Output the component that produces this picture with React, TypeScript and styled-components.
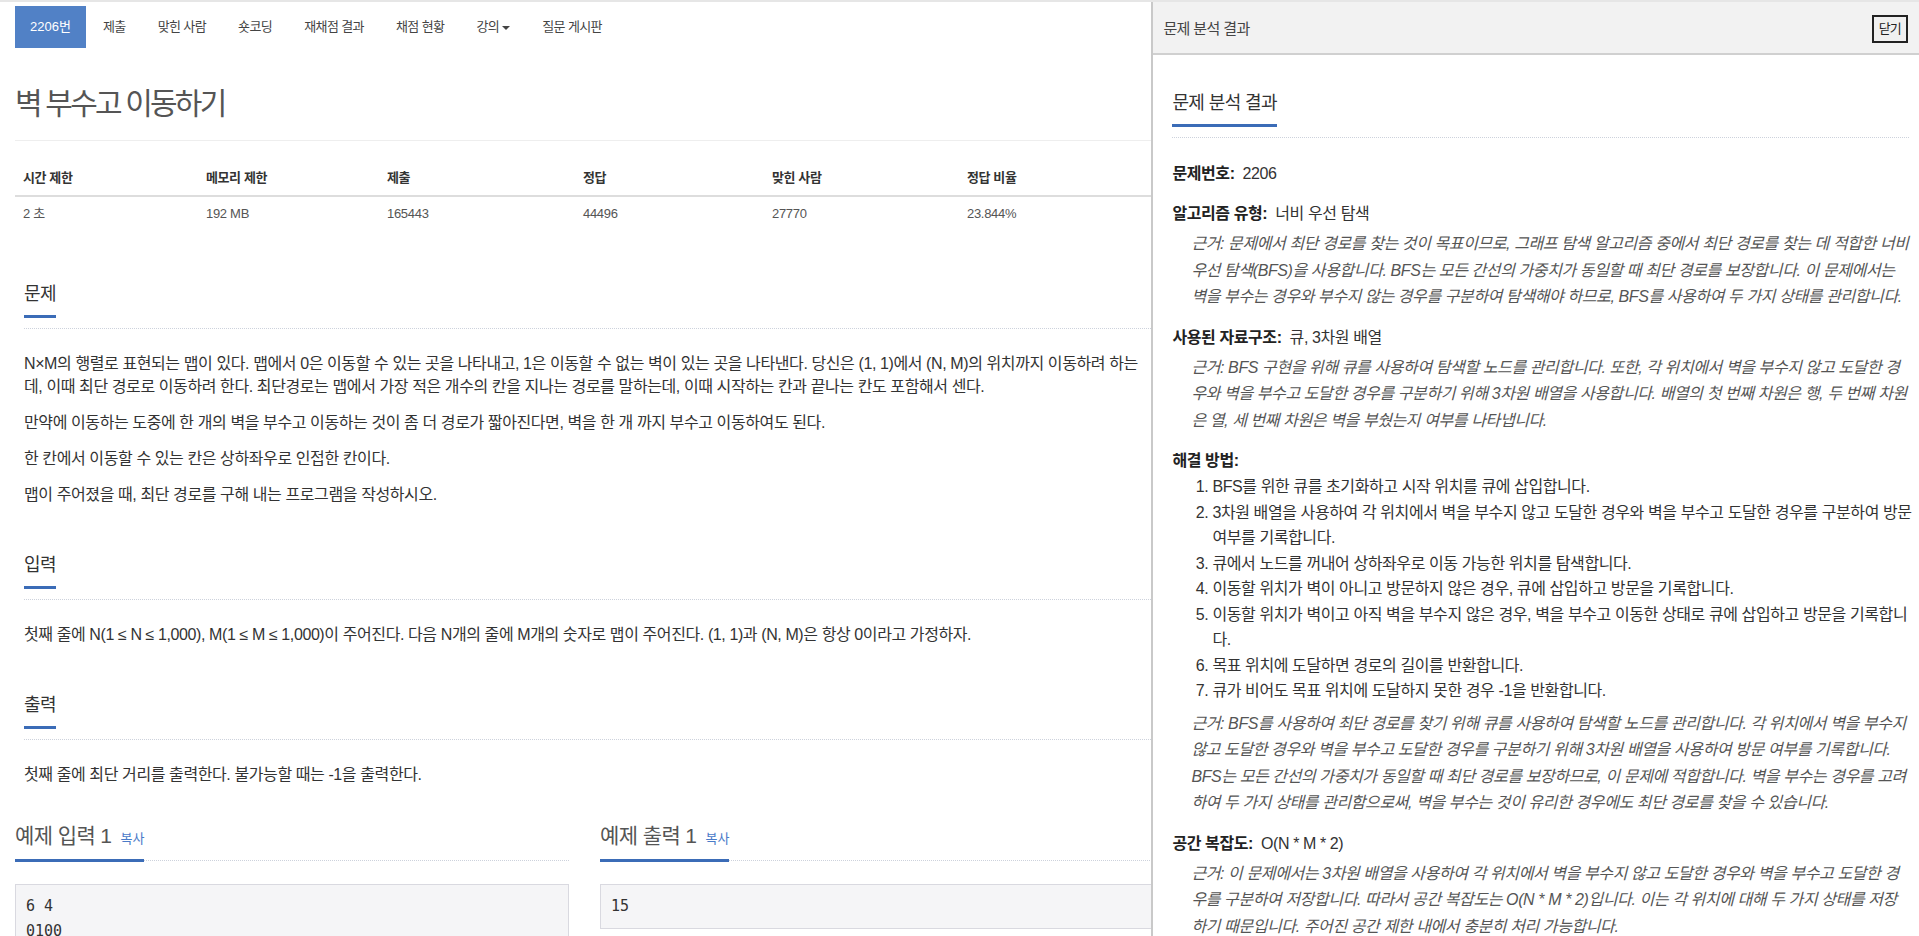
import React from 'react';
import styled, { createGlobalStyle } from 'styled-components';

const GlobalStyle = createGlobalStyle`
  *, *::before, *::after { box-sizing: border-box; }
  html, body { margin: 0; padding: 0; height: 100%; overflow: hidden; background: #ffffff; }
  body {
    font-family: "Liberation Sans", "Noto Sans CJK KR", sans-serif;
    color: #333;
  }
`;

const Layout = styled.div`
  display: grid;
  grid-template-columns: 60% 40%;
  height: 100vh;
  border-top: 2px solid #e6e6e6;
  overflow: hidden;
`;

const Main = styled.main`
  min-width: 0;
  overflow: hidden;
  padding: 4px 0 0 15px;
`;

const Nav = styled.ul`
  display: flex;
  list-style: none;
  margin: 0;
  padding: 0;
`;

const NavItem = styled.li<{ $active?: boolean }>`
  padding: 10px 15px;
  margin-right: 2px;
  font-size: 13px;
  line-height: 22px;
  letter-spacing: ${(p) => (p.$active ? '0' : '-0.6px')};
  color: ${(p) => (p.$active ? '#ffffff' : '#444')};
  background: ${(p) => (p.$active ? '#5181c6' : 'transparent')};
  white-space: nowrap;
`;

const Caret = styled.span`
  display: inline-block;
  width: 0;
  height: 0;
  margin-left: 3px;
  vertical-align: middle;
  border-top: 4px solid #444;
  border-left: 4px solid transparent;
  border-right: 4px solid transparent;
`;

const Title = styled.h1`
  margin: 36px 0 0;
  padding-bottom: 16px;
  border-bottom: 1px solid #eeeeee;
  font-size: 30px;
  line-height: 40px;
  font-weight: 400;
  color: #555;
  letter-spacing: -2.8px;
`;

const InfoTable = styled.table`
  width: 100%;
  margin-top: 20px;
  border-collapse: collapse;
  table-layout: fixed;
`;

const Th = styled.th`
  padding: 8px;
  text-align: left;
  font-size: 13px;
  line-height: 18px;
  font-weight: 700;
  color: #333;
  letter-spacing: -0.4px;
  border-bottom: 2px solid #dddddd;
`;

const Td = styled.td`
  padding: 8px;
  font-size: 13px;
  line-height: 18px;
  color: #555;
  letter-spacing: -0.3px;
`;

const Section = styled.section<{ $mt: number }>`
  margin: ${(p) => p.$mt}px 0 0 9px;
`;

const SectionHead = styled.div`
  border-bottom: 1px dotted #cdd2dc;
  padding-bottom: 10px;
`;

const HeadTitle = styled.h2`
  display: inline-block;
  margin: 0;
  padding-bottom: 9px;
  border-bottom: 3px solid #3b6cb7;
  font-size: 18px;
  line-height: 24px;
  font-weight: 400;
  letter-spacing: -0.6px;
  color: #333;
`;

const SectionBody = styled.div`
  margin-top: 23px;
`;

const Para = styled.p`
  margin: 0 0 13px;
  font-size: 16px;
  line-height: 23px;
  letter-spacing: -0.4px;
  color: #333;
  white-space: nowrap;
`;

const Samples = styled.div`
  display: grid;
  grid-template-columns: 554px 554px;
  column-gap: 31px;
  margin-top: 35px;
`;

const SampleHead = styled.div`
  border-bottom: 1px dotted #cdd2dc;
`;

const SampleTitle = styled.h2`
  display: inline-block;
  margin: 0 0 -2px;
  padding-bottom: 5px;
  border-bottom: 3px solid #3b6cb7;
  font-size: 21px;
  line-height: 30px;
  font-weight: 400;
  color: #555;
  letter-spacing: -0.6px;
`;

const CopyLink = styled.span`
  margin-left: 9px;
  font-size: 13px;
  letter-spacing: 0;
  color: #4a7bc8;
`;

const SampleBox = styled.pre`
  margin: 23px 0 0;
  padding: 9px 10px;
  background: #f5f5f7;
  border: 1px solid #d9d9e0;
  font-family: "DejaVu Sans Mono", "Liberation Mono", monospace;
  font-size: 15px;
  line-height: 25px;
  color: #333;
`;

const Panel = styled.aside`
  position: relative;
  min-width: 0;
  border-left: 2px solid #c9c9c9;
  background: #ffffff;
  display: flex;
  flex-direction: column;
  overflow: hidden;
`;

const PanelHeader = styled.div`
  flex: 0 0 53px;
  display: flex;
  align-items: center;
  justify-content: space-between;
  padding: 0 11px 0 10px;
  background: #f2f2f2;
  border-bottom: 2px solid #d0d0d0;
`;

const PanelTitle = styled.div`
  font-size: 15px;
  letter-spacing: -0.6px;
  color: #444;
`;

const CloseButton = styled.button`
  margin-top: 3px;
  padding: 3px 5px;
  font-family: inherit;
  font-size: 13px;
  line-height: 18px;
  letter-spacing: -0.8px;
  color: #222;
  background: #f0f0f0;
  border: 2px solid #222;
  border-radius: 0;
`;

const PanelBody = styled.div`
  padding: 36px 10px 0 19px;
`;

const Analysis = styled.div`
  margin-top: 23px;
  font-size: 16px;
  letter-spacing: -0.4px;
  color: #333;
`;

const Item = styled.div`
  margin-bottom: 14px;
`;

const ItemLine = styled.div`
  line-height: 26px;
  white-space: nowrap;
`;

const Label = styled.span`
  font-weight: 700;
  color: #222;
`;

const Value = styled.span`
  margin-left: 8px;
`;

const Reason = styled.p<{ $mt?: number }>`
  margin: ${(p) => p.$mt ?? 4}px 0 0 19px;
  font-style: italic;
  line-height: 26.5px;
  color: #555;
  white-space: nowrap;
`;

const Steps = styled.ol`
  margin: 0;
  padding-left: 40px;
`;

const Step = styled.li`
  line-height: 25.5px;
  white-space: nowrap;
`;

const Lines = ({ lines }: { lines: string[] }) => (
  <>
    {lines.map((l, i) => (
      <React.Fragment key={i}>
        {i > 0 && <br />}
        {l}
      </React.Fragment>
    ))}
  </>
);

const navItems = ['제출', '맞힌 사람', '숏코딩', '재채점 결과', '채점 현황'];

const cols = [183, 181, 196, 189, 195];

const steps: string[][] = [
  ['BFS를 위한 큐를 초기화하고 시작 위치를 큐에 삽입합니다.'],
  [
    '3차원 배열을 사용하여 각 위치에서 벽을 부수지 않고 도달한 경우와 벽을 부수고 도달한 경우를 구분하여 방문',
    '여부를 기록합니다.',
  ],
  ['큐에서 노드를 꺼내어 상하좌우로 이동 가능한 위치를 탐색합니다.'],
  ['이동할 위치가 벽이 아니고 방문하지 않은 경우, 큐에 삽입하고 방문을 기록합니다.'],
  [
    '이동할 위치가 벽이고 아직 벽을 부수지 않은 경우, 벽을 부수고 이동한 상태로 큐에 삽입하고 방문을 기록합니',
    '다.',
  ],
  ['목표 위치에 도달하면 경로의 길이를 반환합니다.'],
  ['큐가 비어도 목표 위치에 도달하지 못한 경우 -1을 반환합니다.'],
];

export default function App() {
  return (
    <>
      <GlobalStyle />
      <Layout>
        <Main>
          <Nav>
            <NavItem $active>2206번</NavItem>
            {navItems.map((n) => (
              <NavItem key={n}>{n}</NavItem>
            ))}
            <NavItem>
              강의
              <Caret />
            </NavItem>
            <NavItem>질문 게시판</NavItem>
          </Nav>

          <Title>벽 부수고 이동하기</Title>

          <InfoTable>
            <colgroup>
              {cols.map((w, i) => (
                <col key={i} style={{ width: w }} />
              ))}
              <col />
            </colgroup>
            <thead>
              <tr>
                <Th>시간 제한</Th>
                <Th>메모리 제한</Th>
                <Th>제출</Th>
                <Th>정답</Th>
                <Th>맞힌 사람</Th>
                <Th>정답 비율</Th>
              </tr>
            </thead>
            <tbody>
              <tr>
                <Td>2 초</Td>
                <Td>192 MB</Td>
                <Td>165443</Td>
                <Td>44496</Td>
                <Td>27770</Td>
                <Td>23.844%</Td>
              </tr>
            </tbody>
          </InfoTable>

          <Section $mt={51}>
            <SectionHead>
              <HeadTitle>문제</HeadTitle>
            </SectionHead>
            <SectionBody>
              <Para>
                <Lines
                  lines={[
                    'N×M의 행렬로 표현되는 맵이 있다. 맵에서 0은 이동할 수 있는 곳을 나타내고, 1은 이동할 수 없는 벽이 있는 곳을 나타낸다. 당신은 (1, 1)에서 (N, M)의 위치까지 이동하려 하는',
                    '데, 이때 최단 경로로 이동하려 한다. 최단경로는 맵에서 가장 적은 개수의 칸을 지나는 경로를 말하는데, 이때 시작하는 칸과 끝나는 칸도 포함해서 센다.',
                  ]}
                />
              </Para>
              <Para>만약에 이동하는 도중에 한 개의 벽을 부수고 이동하는 것이 좀 더 경로가 짧아진다면, 벽을 한 개 까지 부수고 이동하여도 된다.</Para>
              <Para>한 칸에서 이동할 수 있는 칸은 상하좌우로 인접한 칸이다.</Para>
              <Para>맵이 주어졌을 때, 최단 경로를 구해 내는 프로그램을 작성하시오.</Para>
            </SectionBody>
          </Section>

          <Section $mt={47}>
            <SectionHead>
              <HeadTitle>입력</HeadTitle>
            </SectionHead>
            <SectionBody>
              <Para>첫째 줄에 N(1 ≤ N ≤ 1,000), M(1 ≤ M ≤ 1,000)이 주어진다. 다음 N개의 줄에 M개의 숫자로 맵이 주어진다. (1, 1)과 (N, M)은 항상 0이라고 가정하자.</Para>
            </SectionBody>
          </Section>

          <Section $mt={47}>
            <SectionHead>
              <HeadTitle>출력</HeadTitle>
            </SectionHead>
            <SectionBody>
              <Para>첫째 줄에 최단 거리를 출력한다. 불가능할 때는 -1을 출력한다.</Para>
            </SectionBody>
          </Section>

          <Samples>
            <div>
              <SampleHead>
                <SampleTitle>
                  예제 입력 1<CopyLink>복사</CopyLink>
                </SampleTitle>
              </SampleHead>
              <SampleBox>{'6 4\n0100\n1110\n1000\n0000\n0111\n0000'}</SampleBox>
            </div>
            <div>
              <SampleHead>
                <SampleTitle>
                  예제 출력 1<CopyLink>복사</CopyLink>
                </SampleTitle>
              </SampleHead>
              <SampleBox>15</SampleBox>
            </div>
          </Samples>
        </Main>

        <Panel>
          <PanelHeader>
            <PanelTitle>문제 분석 결과</PanelTitle>
            <CloseButton type="button">닫기</CloseButton>
          </PanelHeader>
          <PanelBody>
            <SectionHead>
              <HeadTitle>문제 분석 결과</HeadTitle>
            </SectionHead>
            <Analysis>
              <Item>
                <ItemLine>
                  <Label>문제번호:</Label>
                  <Value>2206</Value>
                </ItemLine>
              </Item>
              <Item>
                <ItemLine>
                  <Label>알고리즘 유형:</Label>
                  <Value>너비 우선 탐색</Value>
                </ItemLine>
                <Reason>
                  <Lines
                    lines={[
                      '근거: 문제에서 최단 경로를 찾는 것이 목표이므로, 그래프 탐색 알고리즘 중에서 최단 경로를 찾는 데 적합한 너비',
                      '우선 탐색(BFS)을 사용합니다. BFS는 모든 간선의 가중치가 동일할 때 최단 경로를 보장합니다. 이 문제에서는',
                      '벽을 부수는 경우와 부수지 않는 경우를 구분하여 탐색해야 하므로, BFS를 사용하여 두 가지 상태를 관리합니다.',
                    ]}
                  />
                </Reason>
              </Item>
              <Item>
                <ItemLine>
                  <Label>사용된 자료구조:</Label>
                  <Value>큐, 3차원 배열</Value>
                </ItemLine>
                <Reason>
                  <Lines
                    lines={[
                      '근거: BFS 구현을 위해 큐를 사용하여 탐색할 노드를 관리합니다. 또한, 각 위치에서 벽을 부수지 않고 도달한 경',
                      '우와 벽을 부수고 도달한 경우를 구분하기 위해 3차원 배열을 사용합니다. 배열의 첫 번째 차원은 행, 두 번째 차원',
                      '은 열, 세 번째 차원은 벽을 부쉈는지 여부를 나타냅니다.',
                    ]}
                  />
                </Reason>
              </Item>
              <Item>
                <ItemLine>
                  <Label>해결 방법:</Label>
                </ItemLine>
                <Steps>
                  {steps.map((s, i) => (
                    <Step key={i}>
                      <Lines lines={s} />
                    </Step>
                  ))}
                </Steps>
                <Reason $mt={7}>
                  <Lines
                    lines={[
                      '근거: BFS를 사용하여 최단 경로를 찾기 위해 큐를 사용하여 탐색할 노드를 관리합니다. 각 위치에서 벽을 부수지',
                      '않고 도달한 경우와 벽을 부수고 도달한 경우를 구분하기 위해 3차원 배열을 사용하여 방문 여부를 기록합니다.',
                      'BFS는 모든 간선의 가중치가 동일할 때 최단 경로를 보장하므로, 이 문제에 적합합니다. 벽을 부수는 경우를 고려',
                      '하여 두 가지 상태를 관리함으로써, 벽을 부수는 것이 유리한 경우에도 최단 경로를 찾을 수 있습니다.',
                    ]}
                  />
                </Reason>
              </Item>
              <Item>
                <ItemLine>
                  <Label>공간 복잡도:</Label>
                  <Value>O(N * M * 2)</Value>
                </ItemLine>
                <Reason>
                  <Lines
                    lines={[
                      '근거: 이 문제에서는 3차원 배열을 사용하여 각 위치에서 벽을 부수지 않고 도달한 경우와 벽을 부수고 도달한 경',
                      '우를 구분하여 저장합니다. 따라서 공간 복잡도는 O(N * M * 2)입니다. 이는 각 위치에 대해 두 가지 상태를 저장',
                      '하기 때문입니다. 주어진 공간 제한 내에서 충분히 처리 가능합니다.',
                    ]}
                  />
                </Reason>
              </Item>
            </Analysis>
          </PanelBody>
        </Panel>
      </Layout>
    </>
  );
}
